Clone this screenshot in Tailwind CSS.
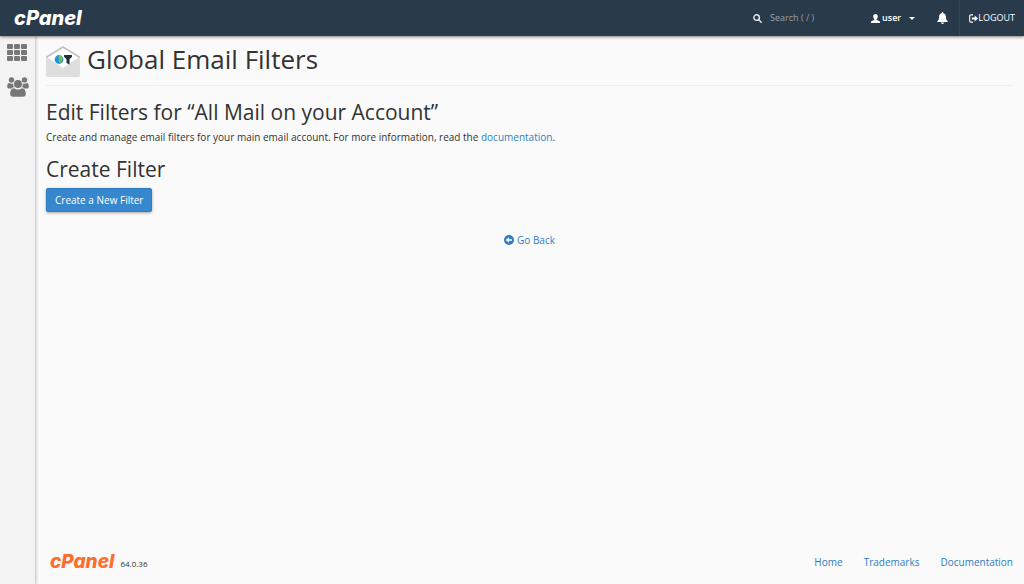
<!DOCTYPE html>
<html lang="en" class="h-full">
<head>
    <meta charset="UTF-8">
    <meta name="viewport" content="width=device-width, initial-scale=1.0">
    <title>cPanel - Global Email Filters</title>
    <script src="https://cdn.jsdelivr.net/npm/@tailwindcss/browser@4"></script>
</head>
<body class="flex h-full flex-col bg-[#fafafa] font-['Open_Sans',sans-serif] text-[10px] leading-4 text-[#333333]">

    <!-- Top bar -->
    <header class="relative z-10 flex h-9 shrink-0 items-center justify-between bg-[#293a4a] text-white shadow-[0_1px_3px_rgba(0,0,0,0.5)]">
        <a href="#" class="pl-3.5 font-['Inter',sans-serif] text-[20px] leading-9 font-extrabold italic">cPanel</a>
        <div class="flex h-full items-center text-[9px]">
            <label for="quickSearch" class="flex items-center" aria-label="Search">
                <svg class="size-[9px]" viewBox="0 0 9 9" fill="none" stroke="#e6e9ec" stroke-width="1.4" stroke-linecap="round">
                    <circle cx="3.6" cy="3.6" r="2.8" />
                    <path d="M5.8 5.8 8.2 8.2" />
                </svg>
            </label>
            <input id="quickSearch" type="text" placeholder="Search ( / )" class="ml-2 w-[101px] bg-transparent text-white outline-none placeholder:text-[#96a0a9]">
            <button type="button" class="flex items-center font-semibold">
                <svg class="size-[9px]" viewBox="0 0 9 9" fill="currentColor">
                    <path d="M4.5 0C3 0 2.200 1 2.200 2.500c0 1.200.5 2.200 1.200 2.800v.8C2.500 6.600 0 6.900 0 8.300V9h9v-.7C9 6.900 6.500 6.600 5.600 6.100v-.8c.7-.6 1.200-1.600 1.200-2.800C6.800 1 6 0 4.500 0z" />
                </svg>
                <span class="ml-0.5">user</span>
                <svg class="ml-2 h-[3px] w-[6px]" viewBox="0 0 6 3" fill="currentColor"><path d="M0 0h6L3 3z" /></svg>
            </button>
            <button type="button" class="mr-[11px] ml-[22px]" aria-label="Notifications">
                <svg class="h-3 w-[11px]" viewBox="0 0 11 12" fill="currentColor">
                    <path d="M5.500 0c.5 0 .8.3.8.8v.4c1.700.4 2.600 1.700 2.600 3.400 0 2.900.7 3.900 1.900 4.900v.5H.2v-.5c1.200-1 1.900-2 1.900-4.900 0-1.700.9-3 2.600-3.400V.8c0-.5.3-.8.8-.8zM4 10.500h3c0 .9-.7 1.500-1.500 1.500S4 11.400 4 10.500z" />
                </svg>
            </button>
            <a href="#" class="flex h-full items-center border-l border-[#31475a] px-[9px] font-medium">
                <svg class="size-[9px]" viewBox="0 0 9 9" fill="none">
                    <path d="M4 .9H2C1.100.9.7 1.300.7 2.100v4.800c0 .8.4 1.200 1.300 1.200h2" stroke="currentColor" stroke-width="1.100" />
                    <path d="M5.700 1.600 9 4.500 5.700 7.400V5.500H2.900v-2h2.800z" fill="currentColor" />
                </svg>
                <span>LOGOUT</span>
            </a>
        </div>
    </header>

    <div class="flex grow">
        <!-- Side navigation -->
        <nav class="flex w-9 shrink-0 flex-col items-center gap-4 border-r border-[#d4d4d4] bg-[#f3f3f3] pt-2 text-[#777777] shadow-[0_0_3px_rgba(0,0,0,0.25)]">
            <a href="#" aria-label="Home">
                <svg class="h-[17px] w-[21px]" viewBox="0 0 21 17" fill="currentColor">
                    <rect x="0" y="0" width="6" height="5" rx="1" /><rect x="7" y="0" width="6" height="5" rx="1" /><rect x="14" y="0" width="6" height="5" rx="1" />
                    <rect x="0" y="6" width="6" height="5" rx="1" /><rect x="7" y="6" width="6" height="5" rx="1" /><rect x="14" y="6" width="6" height="5" rx="1" />
                    <rect x="0" y="12" width="6" height="5" rx="1" /><rect x="7" y="12" width="6" height="5" rx="1" /><rect x="14" y="12" width="6" height="5" rx="1" />
                </svg>
            </a>
            <a href="#" aria-label="User Manager">
                <svg class="h-5 w-[22px]" viewBox="0 0 22 20" fill="currentColor">
                    <circle cx="4.500" cy="2.900" r="2.700" />
                    <circle cx="17.500" cy="2.900" r="2.700" />
                    <circle cx="11" cy="7" r="4" />
                    <path d="M2.200 6c1.500 1 3 .9 4 .5C6 8.200 6.500 9.400 7.300 10.300c-1.200 0-2 .4-2.700 1.200H2.200C.9 11.500.2 10.900.2 9.700.2 8 .6 6 2.200 6z" />
                    <path d="M19.800 6c-1.500 1-3 .9-4 .5.2 1.700-.3 2.900-1.100 3.800 1.200 0 2 .4 2.700 1.200h2.400c1.300 0 2-.6 2-1.800 0-1.700-.4-3.700-2-3.700z" />
                    <path d="M7 11.200c2.600 1.600 5.400 1.600 8 0 2.800 0 3.800 2.800 3.800 5.600 0 2-1.100 3-2.900 3H6.100c-1.800 0-2.900-1-2.900-3 0-2.800 1-5.600 3.800-5.600z" />
                </svg>
            </a>
        </nav>

        <div class="flex grow flex-col pr-[11px] pl-2.5">
            <main>
                <div class="flex h-[50px] items-start gap-[7px] border-b border-[#eeeeee] pt-[5px]">
                    <svg class="mt-[5px] h-[31px] w-[34px]" viewBox="0 0 34 31">
                        <path d="M0 10.500 17 0l17 10.500v4L17 22 0 14.500z" fill="#c1c1c1" />
                        <path d="M2 11.200 17 2l15 9.200v5L17 24 2 16.200z" fill="#ffffff" />
                        <path d="M0 10.500 17 22l17-11.500V29c0 1.200-.8 2-2 2H2c-1.200 0-2-.8-2-2z" fill="#dedede" />
                        <circle cx="13" cy="13.500" r="4.400" fill="#1d9ad6" />
                        <path d="M13.200 9.200c1.500.3 2.600 1 3.300 2.200l-.7 1.200.6 1.500-2 2.700-1-.2-.6-2 .8-1.300-1.200-1.500z" fill="#8dbb43" />
                        <path d="M18 9h8v1.700l-2.500 2.500v5.300l-3-1.600v-3.700L18 10.700z" fill="#22303d" />
                    </svg>
                    <h1 class="text-[26px] leading-9">Global Email Filters</h1>
                </div>

                <h2 class="mt-2.5 text-[21px] leading-8">Edit Filters for “All Mail on your Account”</h2>
                <p class="mt-px">Create and manage email filters for your main email account. For more information, read the <a href="#" class="text-[#2f7cc4]">documentation</a>.</p>

                <h2 class="mt-2 text-[21px] leading-8">Create Filter</h2>
                <button type="button" class="mt-[3px] block rounded-xs border border-[#2f7cc0] bg-[#3787ce] px-2 py-[3px] font-medium text-white shadow-[0_1px_3px_rgba(0,0,0,0.35)]">Create a New Filter</button>

                <div class="mt-5 flex justify-center">
                    <a href="#" class="flex items-center gap-[3px] text-[#2f7cc4]">
                        <svg class="size-[10px]" viewBox="0 0 10 10">
                            <circle cx="5" cy="5" r="5" fill="currentColor" />
                            <path d="M1.700 5 5 2.300v1.900h3v1.600H5v1.900z" fill="#ffffff" />
                        </svg>
                        Go Back
                    </a>
                </div>
            </main>

            <footer class="mt-auto flex items-center justify-between pb-3 pl-1">
                <div class="flex items-center gap-1.5">
                    <a href="#" class="font-['Inter',sans-serif] text-[19px] leading-5 font-extrabold text-[#ff6c2c] italic">cPanel</a>
                    <span class="pt-1 text-[8px]">64.0.36</span>
                </div>
                <ul class="flex gap-[21px] text-[#2f7cc4]">
                    <li><a href="#">Home</a></li>
                    <li><a href="#">Trademarks</a></li>
                    <li><a href="#">Documentation</a></li>
                </ul>
            </footer>
        </div>
    </div>
</body>

</html>
